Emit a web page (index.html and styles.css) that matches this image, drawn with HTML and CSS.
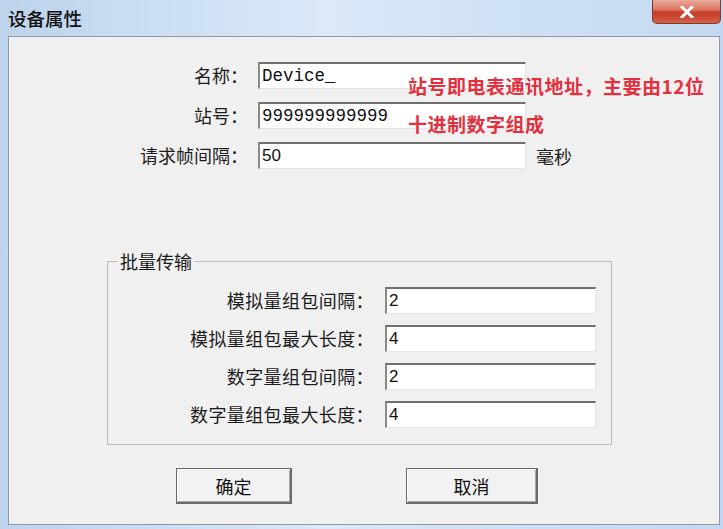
FILE: index.html
```html
<!DOCTYPE html>
<html lang="zh-CN">
<head>
    <meta charset="UTF-8">
    <meta name="viewport" content="width=device-width, initial-scale=1.0">
    <title>设备属性</title>
    <link rel="stylesheet" href="styles.css">
</head>
<body>
    <div class="window">
        <div class="titlebar">
            <span class="title">设备属性</span>
            <button class="close-btn" title="关闭">
                <svg width="14" height="12" viewBox="0 0 14 12">
                    <path d="M2 1 L12 11 M12 1 L2 11" stroke="#fff" stroke-width="3" stroke-linecap="square"/>
                </svg>
            </button>
        </div>
        <div class="client">
            <div class="form-top">
                <label class="label">名称：</label>
                <input class="field mono" type="text" value="Device_">
                <span></span>
                <label class="label">站号：</label>
                <input class="field mono" type="text" value="999999999999">
                <span></span>
                <label class="label">请求帧间隔：</label>
                <input class="field" type="text" value="50">
                <span class="unit">毫秒</span>
            </div>

            <div class="note">站号即电表通讯地址，主要由12位<br>十进制数字组成</div>

            <fieldset class="group">
                <legend>批量传输</legend>
                <div class="group-rows">
                    <label class="label wide">模拟量组包间隔：</label>
                    <input class="field" type="text" value="2">
                    <label class="label wide">模拟量组包最大长度：</label>
                    <input class="field" type="text" value="4">
                    <label class="label wide">数字量组包间隔：</label>
                    <input class="field" type="text" value="2">
                    <label class="label wide">数字量组包最大长度：</label>
                    <input class="field" type="text" value="4">
                </div>
            </fieldset>

            <div class="actions">
                <button class="btn btn-ok">确定</button>
                <button class="btn btn-cancel">取消</button>
            </div>
        </div>
    </div>
</body>
</html>
```

FILE: styles.css
```css
body {
    margin: 0;
    font-family: "Noto Sans CJK SC", "Noto Sans", sans-serif;
    color: #1c1c1c;
}

.window {
    width: 723px;
    height: 529px;
    box-sizing: border-box;
    padding: 0 3px 4px 8px;
    display: flex;
    flex-direction: column;
    background: linear-gradient(90deg, #bdd3ec 0%, #cde0f4 25%, #dbe9f8 45%, #cfe1f5 70%, #c3d8f0 100%);
}

.titlebar {
    height: 36px;
    display: flex;
    justify-content: space-between;
    align-items: flex-start;
}

.title {
    font-size: 18.5px;
    line-height: 36px;
    font-weight: 500;
    color: #111;
}

.close-btn {
    width: 69px;
    height: 24px;
    margin-right: -1px;
    padding: 0;
    border: 1px solid #7d3a30;
    border-top: none;
    border-radius: 0 0 5px 5px;
    background: linear-gradient(#eaa99a 0%, #dc7a66 40%, #c63b26 55%, #d4604b 100%);
    display: flex;
    align-items: center;
    justify-content: center;
}

.client {
    flex: 1;
    position: relative;
    background: #f0f0f0;
    border: 1px solid #8d99a8;
}

.form-top {
    display: grid;
    grid-template-columns: 239px 268px auto;
    column-gap: 10px;
    row-gap: 13px;
    padding-top: 25px;
    align-items: center;
}

.label {
    font-size: 18px;
    line-height: 27px;
    text-align: right;
    white-space: nowrap;
}

.label.wide {
    letter-spacing: 0.4px;
}

.field {
    box-sizing: border-box;
    height: 27px;
    width: 100%;
    margin: 0;
    padding: 0 0 0 2px;
    border-top: 2px solid #6f6f6f;
    border-left: 2px solid #8a8a8a;
    border-right: 1px solid #e4e4e4;
    border-bottom: 1px solid #e4e4e4;
    background: #fff;
    font-family: "Liberation Sans", sans-serif;
    font-size: 17px;
    color: #111;
    outline: none;
}

.field.mono {
    font-family: "Liberation Mono", monospace;
    font-size: 17.5px;
}

.unit {
    font-size: 18px;
}

.note {
    position: absolute;
    left: 399px;
    top: 30px;
    font-size: 19px;
    line-height: 38px;
    font-weight: bold;
    letter-spacing: 0.5px;
    color: #e3303f;
}

.group {
    box-sizing: border-box;
    width: 505px;
    margin: 82px 0 0 98px;
    padding: 16px 0 16px 10px;
    border: 1px solid #bcbcbc;
}

.group legend {
    padding: 0 2px;
    font-size: 18px;
    line-height: 20px;
}

.group-rows {
    display: grid;
    grid-template-columns: 256px 211px;
    column-gap: 11px;
    row-gap: 11px;
    align-items: center;
}

.actions {
    display: flex;
    gap: 114px;
    margin-top: 23px;
    padding-left: 167px;
}

.btn {
    height: 36px;
    padding: 0;
    font-family: inherit;
    font-size: 18px;
    color: #111;
    background: #f2f2f2;
    border: 1px solid #6a6a6a;
    border-right-width: 2px;
    border-bottom-width: 2px;
    box-shadow: inset 1px 1px #fff, inset -1px -1px #a8a8a8;
}

.btn-ok {
    width: 116px;
}

.btn-cancel {
    width: 132px;
}
```
